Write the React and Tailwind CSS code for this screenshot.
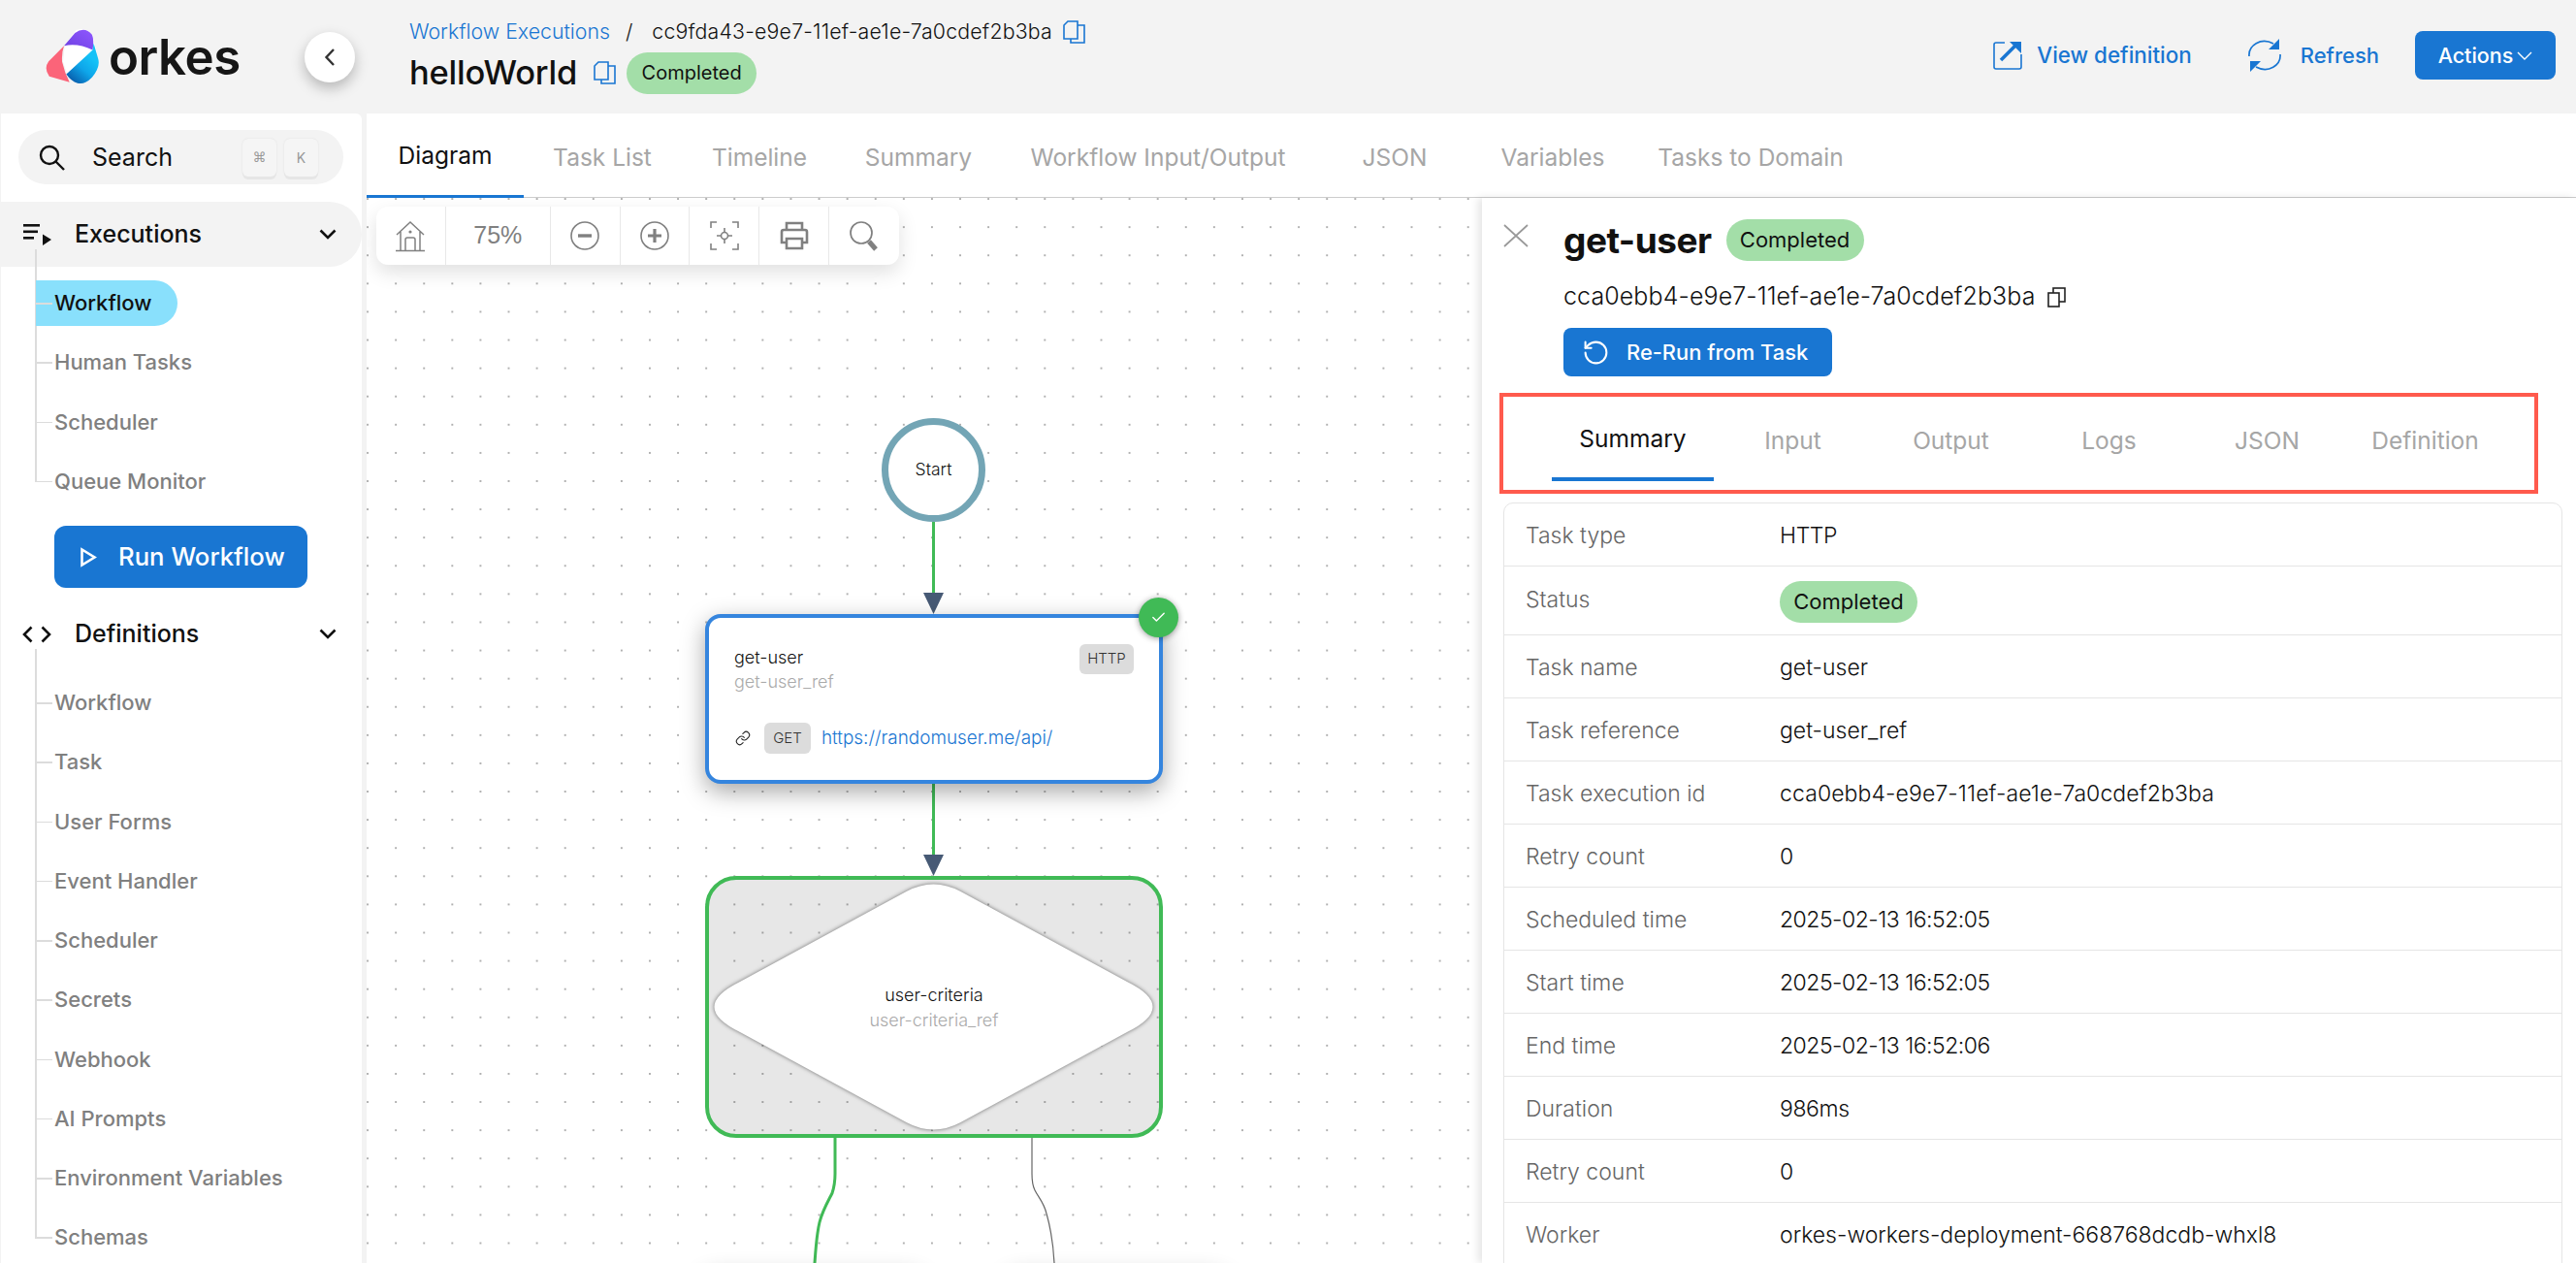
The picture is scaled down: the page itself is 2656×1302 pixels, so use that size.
import React from "react";
import { Link, Check, RotateCcw } from "lucide-react";

const blue = "#1976d2";

const Chevron = () => (
  <svg width="18" height="11" viewBox="0 0 18 11" fill="none" stroke="#111" strokeWidth="2.6">
    <path d="M1.5 1.5 9 9l7.5-7.5" />
  </svg>
);

const BlueCopy = () => (
  <svg width="23" height="24" viewBox="0 0 23 24" fill="none" stroke={blue} strokeWidth="1.6">
    <path d="M5 1h10v18H1V5z" />
    <path d="M15 5h7v18H8v-4" />
  </svg>
);

const ToolCell = ({ w = "w-[72px]", children, last }) => (
  <div className={`${w} h-full flex items-center justify-center ${last ? "" : "border-r border-[#e8e8e8]"}`}>
    {children}
  </div>
);

const SideItem = ({ label, active }) => (
  <div className="relative h-[61.250px] flex items-center">
    <span
      className={`ml-[36px] pl-[19px] pr-[27px] h-[47px] flex items-center rounded-r-full text-[22px] font-medium ${
        active ? "bg-[#89e0fc] text-[#111]" : "text-[#808080]"
      }`}
    >
      {label}
    </span>
    <span className="absolute left-[36px] top-[30px] w-[17px] h-[1.5px] bg-[#dcdcdc]" />
  </div>
);

const SideGroup = ({ items, lineTop, active }) => (
  <div className="relative mt-[7px]">
    <span className={`absolute left-[35px] ${lineTop} bottom-[30px] w-[1.5px] bg-[#dcdcdc]`} />
    {items.map((it) => (
      <SideItem key={it} label={it} active={it === active} />
    ))}
  </div>
);

const Sidebar = () => (
  <aside className="w-[372px] h-full bg-white rounded-tr-[6px] ml-px shrink-0 pt-[17px] overflow-hidden">
    <div className="ml-[18px] w-[335px] h-[56px] rounded-full bg-[#f3f3f3] flex items-center pl-[21px]">
      <svg width="28" height="27" viewBox="0 0 28 27" fill="none" stroke="#111" strokeWidth="2.4">
        <circle cx="11" cy="11" r="9" />
        <path d="m17.5 17.5 8.5 8.5" />
      </svg>
      <span className="ml-[27px] pt-[2px] text-[25px] font-normal text-[#111]">Search</span>
      <div className="ml-auto mr-[26px] flex gap-[8px]">
        <span className="w-[35px] h-[39px] rounded-[6px] bg-[#f5f5f5] shadow-[0_3px_0_#e6e6e6,0_0_2px_#ddd] flex items-center justify-center text-[14px] text-[#999] font-[family-name:DejaVu_Sans,sans-serif]">⌘</span>
        <span className="w-[35px] h-[39px] rounded-[6px] bg-[#f5f5f5] shadow-[0_3px_0_#e6e6e6,0_0_2px_#ddd] flex items-center justify-center text-[14px] text-[#999]">K</span>
      </div>
    </div>

    <div className="mt-[18px] h-[67px] rounded-r-full bg-[#f3f3f3] flex items-center pl-[23px] pr-[26px]">
      <svg width="30" height="24" viewBox="0 0 30 24" fill="#111">
        <rect x="0" y="1" width="17" height="2.6" />
        <rect x="0" y="7.5" width="15" height="2.6" />
        <rect x="0" y="14" width="11" height="2.6" />
        <path d="M20 11.5 29 17l-9 6z" />
      </svg>
      <span className="ml-[23px] text-[25px] font-medium text-[#111]">Executions</span>
      <span className="ml-auto">
        <Chevron />
      </span>
    </div>
    <SideGroup
      lineTop="top-[-25px]"
      active="Workflow"
      items={["Workflow", "Human Tasks", "Scheduler", "Queue Monitor"]}
    />
    <div className="mt-[15px] ml-[55px] w-[261px] h-[64px] rounded-[12px] bg-[#1976d2] flex items-center pl-[27px]">
      <svg width="17" height="21" viewBox="0 0 17 21" fill="none" stroke="#fff" strokeWidth="2.6">
        <path d="M1.5 2.5v16l13-8z" />
      </svg>
      <span className="ml-[22px] text-[25.700px] font-medium text-white">Run Workflow</span>
    </div>

    <div className="mt-[14px] h-[67px] flex items-center pl-[22px] pr-[26px]">
      <svg width="30" height="18" viewBox="0 0 30 18" fill="none" stroke="#111" strokeWidth="2.6">
        <path d="M9.5 1.5 2 9l7.5 7.5M20.5 1.5 28 9l-7.5 7.5" />
      </svg>
      <span className="ml-[24px] text-[25px] font-medium text-[#111]">Definitions</span>
      <span className="ml-auto">
        <Chevron />
      </span>
    </div>
    <SideGroup
      lineTop="top-[-25px]"
      items={[
        "Workflow",
        "Task",
        "User Forms",
        "Event Handler",
        "Scheduler",
        "Secrets",
        "Webhook",
        "AI Prompts",
        "Environment Variables",
        "Schemas",
      ]}
    />
  </aside>
);

const Header = () => (
  <header className="h-[117px] shrink-0 flex items-center relative">
    <div className="w-[314px] pl-[47px] flex items-center shrink-0">
      <svg width="56" height="57" viewBox="141 88 168 172">
        <defs>
          <linearGradient id="lgBlue" x1="0.2" y1="1" x2="0.7" y2="0.3">
            <stop offset="0" stopColor="#0759a8" />
            <stop offset="0.55" stopColor="#0ea5e9" />
            <stop offset="1" stopColor="#14c2f7" />
          </linearGradient>
          <linearGradient id="lgPurple" x1="0" y1="1" x2="1" y2="0">
            <stop offset="0" stopColor="#6c3fe0" />
            <stop offset="1" stopColor="#8f58ff" />
          </linearGradient>
        </defs>
        <path d="M200 140 235 92Q262 80 285 105L300 160 280 230 210 235 195 190z" fill="#fff" />
        <path d="M198 140 232 100Q262 78 285 105 292 120 287 153 240 130 198 140z" fill="url(#lgPurple)" />
        <path d="M198 140 150 188Q134 210 152 235L215 253Q200 225 192 190 190 160 198 140z" fill="#fb6479" />
        <path d="M290 132 304 180Q312 205 285 238 262 262 240 256 220 250 205 228L287 153z" fill="url(#lgBlue)" />
      </svg>
      <span className="ml-[9px] text-[51px] leading-none font-semibold tracking-[-0.5px] text-[#161616]">orkes</span>
    </div>
    <button className="w-[52px] h-[52px] rounded-full bg-white shadow-[0_6px_14px_rgba(0,0,0,0.25)] flex items-center justify-center shrink-0">
      <svg width="12" height="20" viewBox="0 0 12 20" fill="none" stroke="#333" strokeWidth="2.4">
        <path d="M10 2 2.5 10l7.5 8" />
      </svg>
    </button>
    <div className="ml-[56px] flex flex-col">
      <div className="flex items-center h-[30px] -mt-[3px] text-[21.300px] font-light">
        <span className="text-[#1976d2]">Workflow Executions</span>
        <span className="ml-[16px] text-[#111]">/</span>
        <span className="ml-[20px] text-[#111] tracking-[0.2px]">cc9fda43-e9e7-11ef-ae1e-7a0cdef2b3ba</span>
        <span className="ml-[11px]">
          <BlueCopy />
        </span>
      </div>
      <div className="flex items-center mt-[6px] h-[43px]">
        <span className="text-[34.500px] font-medium text-[#111] tracking-[-0.2px]">helloWorld</span>
        <span className="ml-[17px]">
          <BlueCopy />
        </span>
        <span className="ml-[11px] w-[134px] h-[43px] rounded-full bg-[#a3dea8] flex items-center justify-center text-[20px] font-normal text-[#111]">
          Completed
        </span>
      </div>
    </div>
    <div className="ml-auto -mt-[3px] flex items-center pr-[21px]">
      <svg width="30" height="30" viewBox="0 0 30 30" fill="none" stroke="#1976d2" strokeWidth="1.6">
        <path d="M12 2H3a2 2 0 0 0-2 2v23a2 2 0 0 0 2 2h24a2 2 0 0 0 2-2V14" />
        <path d="M8 20 23 5" strokeWidth="3.6" />
        <path d="M17 1h12v12z" fill="#1976d2" stroke="none" />
      </svg>
      <span className="ml-[15px] text-[22.400px] font-medium text-[#1976d2]">View definition</span>
      <svg className="ml-[57px]" width="36" height="36" viewBox="0 0 36 36" fill="none" stroke="#1976d2" strokeWidth="1.7">
        <path d="M2 19C1 8 14-1 27 6" />
        <path d="M34 17c1 11-12 20-25 13" />
        <path d="M33 1v11H22zM3 35V24h11z" fill="#1976d2" stroke="none" />
      </svg>
      <span className="ml-[19px] text-[22px] font-medium text-[#1976d2]">Refresh</span>
      <button className="ml-[37px] w-[145px] h-[50px] rounded-[8px] bg-[#1976d2] text-white text-[21.500px] font-medium flex items-center justify-center gap-[4px]">
        Actions
        <svg width="16" height="9" viewBox="0 0 16 9" fill="none" stroke="#fff" strokeWidth="1.4">
          <path d="M1 1l7 7 7-7" />
        </svg>
      </button>
    </div>
  </header>
);

const mainTabs = [
  ["Diagram", "w-[162px]"],
  ["Task List", "w-[162px]"],
  ["Timeline", "w-[162px]"],
  ["Summary", "w-[166px]"],
  ["Workflow Input/Output", "w-[328px]"],
  ["JSON", "w-[160px]"],
  ["Variables", "w-[166px]"],
  ["Tasks to Domain", "w-[242px]"],
];

const MainTabs = () => (
  <div className="h-[87px] shrink-0 flex border-b-[1.5px] border-[#cccccc] bg-white">
    {mainTabs.map(([t, w], i) => (
      <div
        key={t}
        className={`${w} h-[87px] pt-[3px] flex items-center justify-center text-[24.500px] shrink-0 ${
          i === 0 ? "font-normal text-[#111] border-b-[3px] border-[#1976d2]" : "font-normal text-[#a6a6a6]"
        }`}
      >
        {t}
      </div>
    ))}
  </div>
);

const Toolbar = () => (
  <div className="absolute left-[10px] top-[9px] w-[539px] h-[60px] rounded-[12px] bg-white flex shadow-[0_8px_20px_rgba(0,0,0,0.12)]">
    <ToolCell>
      <svg width="32" height="33" viewBox="0 0 32 33" fill="none" stroke="#808080" strokeWidth="1.5">
        <path d="M2 15 16 2l14 13M6 12v19M26 12v19M1 31.5h30M11 31V20a2 2 0 0 1 2-2h6a2 2 0 0 1 2 2v11" />
        <circle cx="16" cy="12" r="1.6" fill="#808080" stroke="none" />
      </svg>
    </ToolCell>
    <ToolCell w="w-[108px]">
      <span className="text-[25px] font-[family-name:Liberation_Sans,sans-serif] text-[#808080]">75%</span>
    </ToolCell>
    <ToolCell>
      <svg width="30" height="30" viewBox="0 0 30 30" fill="none" stroke="#808080" strokeWidth="1.6">
        <circle cx="15" cy="15" r="14" />
        <path d="M8 15h14" strokeWidth="3.4" />
      </svg>
    </ToolCell>
    <ToolCell>
      <svg width="30" height="30" viewBox="0 0 30 30" fill="none" stroke="#808080" strokeWidth="1.6">
        <circle cx="15" cy="15" r="14" />
        <path d="M8 15h14M15 8v14" strokeWidth="3.2" />
      </svg>
    </ToolCell>
    <ToolCell>
      <svg width="30" height="30" viewBox="0 0 30 30" fill="none" stroke="#808080" strokeWidth="1.6">
        <path d="M1 7V1h6M23 1h6v6M29 23v6h-6M7 29H1v-6" />
        <circle cx="15" cy="15" r="3.5" />
        <path d="M15 7v4.5M15 18.5V23M7 15h4.5M18.5 15H23" />
      </svg>
    </ToolCell>
    <ToolCell>
      <svg width="30" height="30" viewBox="0 0 30 30" fill="none" stroke="#808080" strokeWidth="2.6">
        <path d="M7 9V2h16v7M7 22H2V11a2 2 0 0 1 2-2h22a2 2 0 0 1 2 2v11h-5" />
        <path d="M7 18h16v10H7z" />
      </svg>
    </ToolCell>
    <ToolCell last>
      <svg width="30" height="31" viewBox="0 0 30 31" fill="none" stroke="#808080" strokeWidth="1.7">
        <circle cx="12" cy="12" r="11" />
        <path d="m20 21 7 8" strokeWidth="5" />
      </svg>
    </ToolCell>
  </div>
);

const Canvas = () => (
  <div className="relative flex-1 bg-white bg-[radial-gradient(circle,#b0b0b0_0.9px,transparent_1.1px)] bg-[size:29.1px_29.1px] bg-[position:-13.5px_-13.5px] overflow-hidden">
    {/* edges */}
    <svg className="absolute left-0 top-0" width="1150" height="1100" fill="none">
      <path d="M584.5 334v74M584.5 604v74" stroke="#40ba56" strokeWidth="3" />
      <path d="M574 407h21l-10.500 22zM574 677h21l-10.500 22z" fill="#475a75" />
      <path d="M483 969v37c0 8-1 14-3 20-4 8-10 18-13 30-3 12-4 28-5 42" stroke="#40ba56" strokeWidth="3" />
      <path d="M686 969v37c0 8 1 13 3 17 4 8 9 12 12 24 4 14 7 32 8 51" stroke="#666" strokeWidth="1.2" />
    </svg>

    <Toolbar />

    {/* start */}
    <div className="absolute left-[531px] top-[227px] w-[107px] h-[107px] rounded-full border-[7px] border-[#73a5b5] bg-white flex items-center justify-center text-[17.500px] font-light text-[#111]">
      Start
    </div>

    {/* get-user */}
    <div className="absolute left-[349px] top-[429px] w-[472px] h-[175px] rounded-[16px] border-4 border-[#3585de] bg-white shadow-[0_8px_24px_rgba(0,0,0,0.35)]">
      <div className="absolute left-[26px] top-[29px] text-[18px] leading-[24px] font-light text-[#111]">get-user</div>
      <div className="absolute left-[26px] top-[54px] text-[18px] leading-[24px] font-light text-[#aaaaaa]">get-user_ref</div>
      <span className="absolute right-[26px] top-[27px] w-[56px] h-[31px] rounded-[6px] bg-[#dcdcdc] flex items-center justify-center text-[15px] font-light text-[#333]">HTTP</span>
      <div className="absolute left-[27px] top-[108px] flex items-center">
        <Link size={16} strokeWidth={1.6} color="#222" />
        <span className="ml-[14px] w-[48px] h-[32px] rounded-[6px] bg-[#dcdcdc] flex items-center justify-center text-[15px] font-light text-[#333]">GET</span>
        <span className="ml-[11px] text-[18.900px] font-light text-[#1976d2]">https://randomuser.me/api/</span>
      </div>
      <span className="absolute -right-[20px] -top-[21px] w-[41px] h-[41px] rounded-full bg-[#40ba56] shadow-[0_1px_6px_rgba(0,0,0,0.4)] flex items-center justify-center">
        <Check size={17} color="#fff" strokeWidth={2} />
      </span>
    </div>

    {/* decision */}
    <div className="absolute left-[349px] top-[699px] w-[472px] h-[270px] rounded-[32px] border-4 border-[#40ba56] bg-black/[0.094]">
      <svg className="absolute left-[6px] top-[3px] overflow-visible drop-shadow-[0_0_2px_rgba(0,0,0,0.55)]" width="451" height="256" viewBox="0 0 451 256">
        <path
          fill="#fff"
          d="M197.500 9Q225.500-6 253.500 9L425 102Q478 128 425 154L253.500 247Q225.500 262 197.500 247L26 154Q-27 128 26 102Z"
        />
      </svg>
      <div className="absolute inset-0 flex flex-col items-center justify-center pt-[2px]">
        <span className="text-[18px] leading-[26px] font-light text-[#111]">user-criteria</span>
        <span className="text-[18px] leading-[26px] font-light text-[#aaaaaa]">user-criteria_ref</span>
      </div>
    </div>

    {/* next row of nodes just under the fold */}
    <div className="absolute left-[345px] top-[1112px] w-[230px] h-[40px] rounded-[16px] bg-white shadow-[0_0_24px_rgba(0,0,0,0.3)]" />
    <div className="absolute left-[658px] top-[1112px] w-[230px] h-[40px] rounded-[16px] bg-white shadow-[0_0_24px_rgba(0,0,0,0.3)]" />
  </div>
);

const taskTabs = [
  ["Summary", "w-[167px]"],
  ["Input", "w-[163px]"],
  ["Output", "w-[163px]"],
  ["Logs", "w-[163px]"],
  ["JSON", "w-[163px]"],
  ["Definition", "w-[163px]"],
];

const rows = [
  ["Task type", "HTTP", "tracking-[-0.4px]"],
  ["Status", null],
  ["Task name", "get-user"],
  ["Task reference", "get-user_ref"],
  ["Task execution id", "cca0ebb4-e9e7-11ef-ae1e-7a0cdef2b3ba", "tracking-[0.1px]"],
  ["Retry count", "0"],
  ["Scheduled time", "2025-02-13 16:52:05", "tracking-[-0.5px]"],
  ["Start time", "2025-02-13 16:52:05", "tracking-[-0.5px]"],
  ["End time", "2025-02-13 16:52:06", "tracking-[-0.5px]"],
  ["Duration", "986ms", "tracking-[-0.4px]"],
  ["Retry count", "0"],
  ["Worker", "orkes-workers-deployment-668768dcdb-whxl8"],
];

const TaskPanel = () => (
  <div className="w-[1128px] shrink-0 h-full bg-white pt-[22px] overflow-hidden shadow-[-4px_0_8px_rgba(0,0,0,0.1)] relative">
    <div className="flex items-center h-[43px] pl-[22px]">
      <svg className="-mt-[10px]" width="26" height="24" viewBox="0 0 26 24" stroke="#999" strokeWidth="1.7" fill="none">
        <path d="m1 1 24 22M25 1 1 23" />
      </svg>
      <span className="ml-[36px] text-[37px] font-bold text-[#111] tracking-[-0.5px]">get-user</span>
      <span className="ml-[15px] w-[142px] h-[43px] rounded-full bg-[#a3dea8] flex items-center justify-center text-[22px] text-[#111]">
        Completed
      </span>
    </div>
    <div className="mt-[22px] ml-[84px] flex items-center h-[30px]">
      <span className="text-[25px] font-light text-[#111] tracking-[0.1px]">cca0ebb4-e9e7-11ef-ae1e-7a0cdef2b3ba</span>
      <svg className="ml-[12px]" width="20" height="21" viewBox="0 0 20 21" fill="#fff" stroke="#222" strokeWidth="1.6">
        <rect x="6" y="1" width="12" height="14" />
        <rect x="1" y="6" width="11" height="14" />
      </svg>
    </div>
    <button className="mt-[17px] ml-[84px] w-[277px] h-[50px] rounded-[8px] bg-[#1976d2] flex items-center pl-[19px] text-white">
      <RotateCcw size={29} strokeWidth={1.7} />
      <span className="ml-[17px] text-[21.900px] font-medium">Re-Run from Task</span>
    </button>
    <div className="mt-[17px] ml-[18px] w-[1071px] h-[104px] border-4 border-[#ff5a4d] pl-[50px] flex items-start">
      {taskTabs.map(([t, w], i) => (
        <div
          key={t}
          className={`${w} h-[87px] pt-[3px] flex items-center justify-center text-[24.500px] shrink-0 ${
            i === 0 ? "text-[#111] border-b-4 border-[#1976d2]" : "text-[#a6a6a6]"
          }`}
        >
          {t}
        </div>
      ))}
    </div>
    <div className="mt-[9px] ml-[22px] mr-[14px] rounded-t-[10px] border border-[#e5e5e5]">
      {rows.map(([k, v, fit], i) => (
        <div
          key={k + i}
          className={`flex items-center border-b border-[#e5e5e5] pl-[22px] pt-[2px] ${i === 1 ? "h-[71px]" : "h-[65px]"}`}
        >
          <span className={`w-[262px] shrink-0 text-[23px] font-light text-[#666] ${i === 1 ? "-mt-[4px]" : ""}`}>{k}</span>
          {v ? (
            <span className={`text-[23px] font-light text-[#111] ${fit || ""}`}>{v}</span>
          ) : (
            <span className="w-[142px] h-[43px] rounded-full bg-[#a3dea8] flex items-center justify-center text-[22px] text-[#111]">
              Completed
            </span>
          )}
        </div>
      ))}
    </div>
  </div>
);

const App = () => (
  <div className="h-screen w-full flex flex-col bg-[#f3f3f3] overflow-hidden font-[family-name:Inter,sans-serif]">
    <Header />
    <div className="flex-1 min-h-0 flex gap-[5px]">
      <Sidebar />
      <main className="flex-1 min-w-0 flex flex-col bg-white">
        <MainTabs />
        <div className="flex-1 min-h-0 flex">
          <Canvas />
          <TaskPanel />
        </div>
      </main>
    </div>
  </div>
);

export default App;
